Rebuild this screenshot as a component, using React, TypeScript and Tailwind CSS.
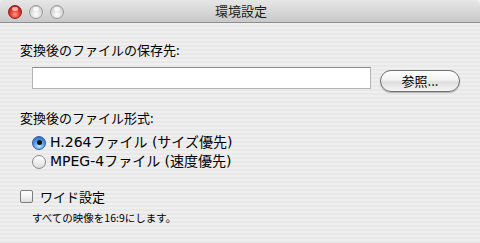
import React from "react";

const font = { fontFamily: '"Noto Sans CJK JP", "Noto Sans", sans-serif' };
const mixed = { fontFamily: '"DejaVu Sans", "Noto Sans CJK JP", sans-serif' };

function Light({ red }: { red?: boolean }) {
  return red ? (
    <div className="w-[14px] h-[14px] rounded-full border border-[#8a1d1d] bg-[radial-gradient(circle_at_50%_70%,#ff9a8a_0%,#e23b2e_45%,#a81410_100%)] relative">
      <div className="absolute left-[3px] top-[1px] w-[6px] h-[4px] rounded-full bg-[#ffd0c8] opacity-80" />
    </div>
  ) : (
    <div className="w-[14px] h-[14px] rounded-full border border-[#9a9a9a] bg-[radial-gradient(circle_at_50%_70%,#ffffff_0%,#dcdcdc_50%,#bdbdbd_100%)] relative">
      <div className="absolute left-[3px] top-[1px] w-[6px] h-[4px] rounded-full bg-white opacity-80" />
    </div>
  );
}

export default function App() {
  return (
    <div
      className="w-[480px] h-[243px] flex flex-col overflow-hidden text-black bg-[#ededed]"
      style={font}
    >
      <div className="h-[23px] shrink-0 flex items-center relative border-b border-[#8e8e8e] bg-[linear-gradient(180deg,#e6e6e6_0%,#d8d8d8_50%,#c8c8c8_100%)] rounded-tr-[6px] rounded-tl-[4px]">
        <div className="flex items-center gap-[7px] pl-[8px] pt-[1px]">
          <Light red />
          <Light />
          <Light />
        </div>
        <div className="absolute left-[215px] top-[3px] text-[13px] leading-[16px] text-[#1a1a1a]">
          環境設定
        </div>
      </div>
      <div className="flex-1 flex flex-col px-[20px] bg-[repeating-linear-gradient(180deg,#efefef_0px,#efefef_2px,#e8e8e8_2px,#e8e8e8_4px)]">
        <div className="mt-[19px] text-[13px] leading-[16px]">変換後のファイルの保存先:</div>
        <div className="flex items-start mt-[9px]">
          <div className="ml-[12px] w-[339px] h-[22px] bg-white border border-[#b4b4b4] border-t-[#8c8c8c]" />
          <button
            className="ml-[9px] mt-[3px] w-[80px] h-[22px] rounded-full border border-[#6f6f6f] bg-[linear-gradient(180deg,#ffffff_0%,#f2f2f2_45%,#dedede_55%,#f5f5f5_100%)] shadow-[0_1px_1px_rgba(0,0,0,0.25)] text-[13px] leading-[18px] text-black flex items-center justify-center"
            style={font}
          >
            参照...
          </button>
        </div>
        <div className="mt-[18px] text-[13px] leading-[16px]">変換後のファイル形式:</div>
        <div className="mt-[7px] ml-[12px] flex items-center gap-[4px] h-[19px] text-[14px]" style={mixed}>
          <div className="w-[14px] h-[14px] rounded-full border border-[#36589a] bg-[radial-gradient(circle_at_50%_75%,#bfe4ff_0%,#4d9be8_50%,#1c5fbf_100%)] flex items-center justify-center">
            <div className="w-[5px] h-[5px] rounded-full bg-[#111]" />
          </div>
          <span>H.264ファイル (サイズ優先)</span>
        </div>
        <div className="ml-[12px] flex items-center gap-[4px] h-[19px] text-[14px]" style={mixed}>
          <div className="w-[14px] h-[14px] rounded-full border border-[#8a8a8a] bg-[linear-gradient(180deg,#ffffff_0%,#ececec_60%,#dadada_100%)]" />
          <span>MPEG-4ファイル (速度優先)</span>
        </div>
        <div className="mt-[16px] flex items-center gap-[7px] h-[19px] text-[13px]">
          <div className="w-[13px] h-[13px] rounded-[2px] border border-[#7d7d7d] bg-[linear-gradient(180deg,#ffffff_0%,#f0f0f0_60%,#dedede_100%)]" />
          <span>ワイド設定</span>
        </div>
        <div className="mt-[5px] ml-[12px] text-[10.5px] leading-[14px]">すべての映像を16:9にします。</div>
      </div>
    </div>
  );
}
